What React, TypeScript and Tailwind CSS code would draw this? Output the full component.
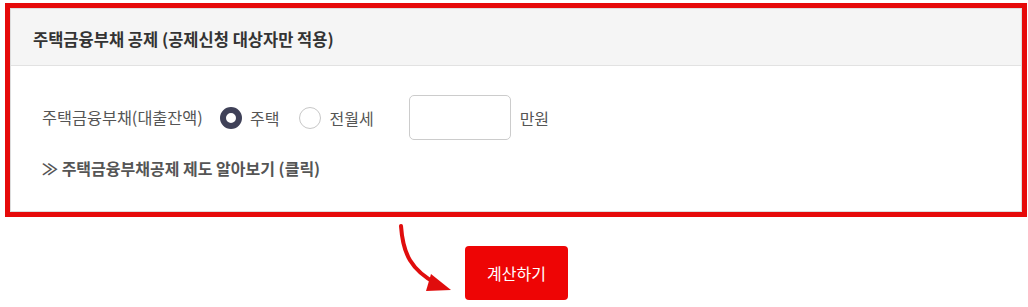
import { useState } from 'react'

export default function App() {
  const [type, setType] = useState<'house' | 'rent'>('house')

  return (
    <div
      className="w-[1028px] h-[307px] bg-white"
      style={{ fontFamily: '"Noto Sans CJK KR", "Noto Sans", sans-serif' }}
    >
      <div className="pt-[3px] pl-[5px]">
        {/* highlighted panel */}
        <div className="w-[1022px] h-[214px] border-[5px] border-[#e60a0a]">
          <div className="h-full border border-[#dddddd] flex flex-col">
            <div className="h-[57px] bg-[#f5f5f5] border-b border-[#e2e2e2] flex items-center pl-[22px] pt-[4px]">
              <h3 className="text-[16.5px] font-bold text-[#333]">
                주택금융부채 공제 (공제신청 대상자만 적용)
              </h3>
            </div>

            <div className="pl-[31px] pt-[29px]">
              <div className="flex items-center h-[45px]">
                <span className="text-[16.3px] text-[#555] w-[178px]">
                  주택금융부채(대출잔액)
                </span>
                <button
                  className="flex items-center gap-[8px]"
                  onClick={() => setType('house')}
                >
                  <span
                    className={
                      type === 'house'
                        ? 'w-[22px] h-[22px] rounded-full border-[6px] border-[#3f4158] bg-white'
                        : 'w-[22px] h-[22px] rounded-full border border-[#c7c7c7] bg-white'
                    }
                  />
                  <span className="text-[16px] text-[#555]">주택</span>
                </button>
                <button
                  className="flex items-center gap-[8px] ml-[20px]"
                  onClick={() => setType('rent')}
                >
                  <span
                    className={
                      type === 'rent'
                        ? 'w-[22px] h-[22px] rounded-full border-[6px] border-[#3f4158] bg-white'
                        : 'w-[22px] h-[22px] rounded-full border border-[#c7c7c7] bg-white'
                    }
                  />
                  <span className="text-[16px] text-[#555]">전월세</span>
                </button>
                <input
                  type="text"
                  className="ml-[35px] w-[102px] h-[45px] rounded-[5px] border border-[#cccccc] outline-none px-2 text-[16px]"
                />
                <span className="ml-[9px] text-[16px] text-[#555]">만원</span>
              </div>

              <p className="mt-[16px] text-[16px] font-bold text-[#555]">
                ≫ 주택금융부채공제 제도 알아보기 (클릭)
              </p>
            </div>
          </div>
        </div>
      </div>

      <div className="flex justify-center pl-[5px] pt-[29px]">
        <div className="relative">
          {/* annotation arrow */}
          <svg
            className="absolute left-[-66px] top-[-22px]"
            width="60"
            height="70"
            viewBox="0 0 60 70"
          >
            <path
              d="M2 2 C 4 30, 12 46, 38 60"
              fill="none"
              stroke="#e00d0d"
              strokeWidth="4"
              strokeLinecap="round"
            />
            <path d="M32 50 L52 66 L27 67 Z" fill="#e00d0d" />
          </svg>
          <button className="w-[103px] h-[54px] rounded-[4px] bg-[#ee0505] text-white text-[16px]">
            계산하기
          </button>
        </div>
      </div>
    </div>
  )
}
